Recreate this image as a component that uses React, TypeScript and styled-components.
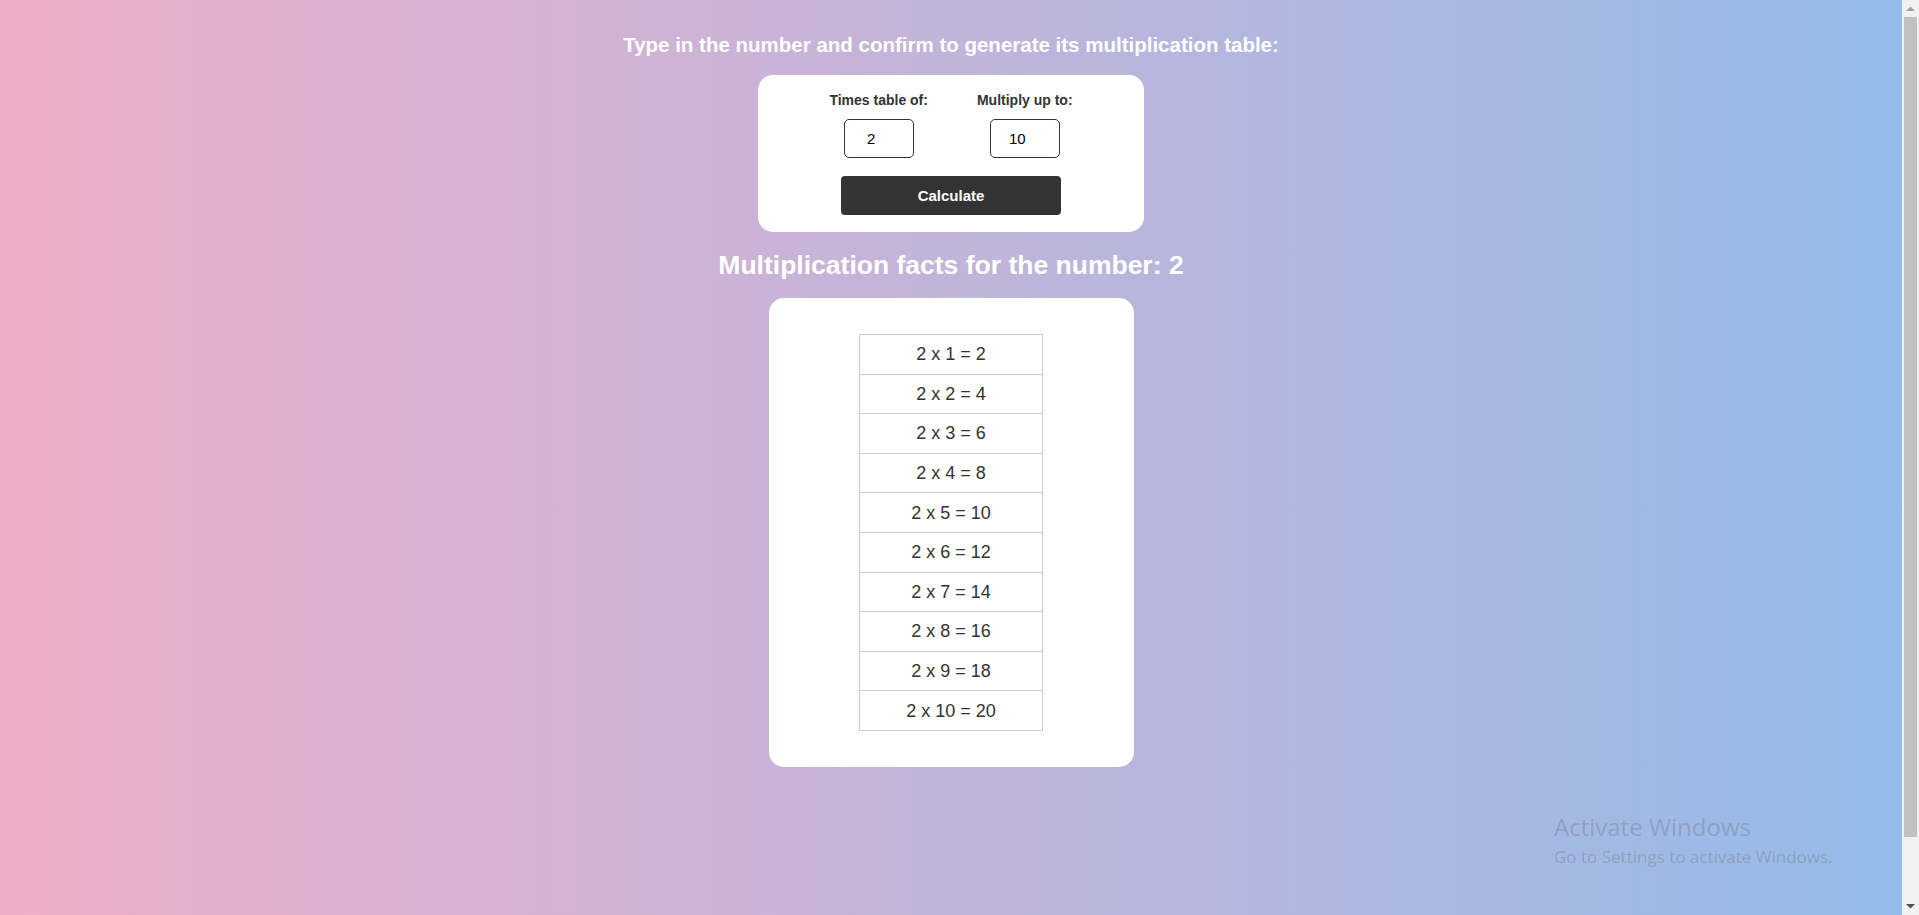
import React from "react";
import styled, { createGlobalStyle } from "styled-components";

const SCROLLBAR = 17;

const GlobalStyle = createGlobalStyle`
  html, body {
    margin: 0;
    padding: 0;
  }
  html {
    background:
      linear-gradient(90deg, #eeaeca 0%, #94bbe9 100%) left top / calc(100% - ${SCROLLBAR}px) 100% no-repeat fixed,
      #94bbe9;
  }
  body {
    font-family: "Liberation Sans", Arial, sans-serif;
    min-height: 100vh;
  }
`;

const Page = styled.main`
  display: flex;
  flex-direction: column;
  align-items: center;
  margin-right: ${SCROLLBAR}px;
  padding: 33px 0 215px;
`;

const Title = styled.h1`
  margin: 0;
  font-size: 20.5px;
  line-height: 24px;
  font-weight: 700;
  color: #ffffff;
`;

const Card = styled.section<{ $width: number }>`
  width: ${(p) => p.$width}px;
  box-sizing: border-box;
  background: #ffffff;
  border-radius: 15px;
  display: flex;
  flex-direction: column;
  align-items: center;
`;

const FormCard = styled(Card)`
  margin-top: 18px;
  padding: 17px 0 17px;
`;

const Fields = styled.div`
  display: flex;
  justify-content: center;
  gap: 49px;
`;

const Field = styled.label`
  display: flex;
  flex-direction: column;
  align-items: center;
  gap: 11px;
`;

const LabelText = styled.span`
  font-size: 14px;
  line-height: 16px;
  font-weight: 700;
  color: #333333;
`;

const NumberInput = styled.input`
  width: 70px;
  height: 39px;
  box-sizing: border-box;
  border: 1px solid #333333;
  border-radius: 5px;
  padding: 0 2px;
  font-family: "Liberation Sans", Arial, sans-serif;
  font-size: 15px;
  font-weight: 400;
  color: #000000;
  text-align: center;
  background: #ffffff;
  outline: none;
`;

const Button = styled.button`
  margin-top: 18px;
  width: 220px;
  height: 39px;
  border: none;
  border-radius: 4px;
  background: #333333;
  color: #ffffff;
  font-family: "Liberation Sans", Arial, sans-serif;
  font-size: 15px;
  font-weight: 700;
  cursor: pointer;
`;

const Subtitle = styled.h2`
  margin: 18px 0 0;
  font-size: 26.5px;
  line-height: 30px;
  font-weight: 700;
  color: #ffffff;
`;

const ResultCard = styled(Card)`
  margin-top: 18px;
  padding: 36px 0;
`;

const Table = styled.table`
  width: 184px;
  border-collapse: collapse;
`;

const Cell = styled.td`
  border: 1px solid #cccccc;
  padding: 9px 0;
  height: 39.6px;
  box-sizing: border-box;
  text-align: center;
  font-size: 18px;
  line-height: 20px;
  color: #333333;
`;

const Watermark = styled.div`
  position: fixed;
  left: 1554px;
  top: 811px;
  font-family: "Open Sans", "Noto Sans", sans-serif;
  color: rgba(125, 125, 135, 0.42);
  pointer-events: none;
`;

const WatermarkTitle = styled.div`
  font-size: 24px;
  line-height: 32px;
`;

const WatermarkText = styled.div`
  margin-top: 2px;
  font-size: 17px;
  line-height: 24px;
`;

const Scrollbar = styled.div`
  position: fixed;
  top: 0;
  right: 0;
  width: ${SCROLLBAR}px;
  height: 100vh;
  background: #f1f1f1;
  display: flex;
  flex-direction: column;
`;

const ScrollButton = styled.div`
  height: 17px;
  flex: none;
  display: flex;
  align-items: center;
  justify-content: center;
`;

const ScrollTrack = styled.div`
  flex: 1;
  display: flex;
  flex-direction: column;
  padding: 0 2px;
`;

const ScrollThumb = styled.div`
  height: 820px;
  background: #c1c1c1;
`;

const Arrow = ({ up, color }: { up?: boolean; color: string }) => (
  <svg width="9" height="5" viewBox="0 0 9 5">
    <polygon points={up ? "0,5 9,5 4.5,0.5" : "0,0 9,0 4.5,4.5"} fill={color} />
  </svg>
);

export default function App() {
  const base = 2;
  const upTo = 10;
  const rows = Array.from({ length: upTo }, (_, i) => i + 1);

  return (
    <>
      <GlobalStyle />
      <Page>
        <Title>Type in the number and confirm to generate its multiplication table:</Title>
        <FormCard $width={386}>
          <Fields>
            <Field>
              <LabelText>Times table of:</LabelText>
              <NumberInput type="number" defaultValue={base} />
            </Field>
            <Field>
              <LabelText>Multiply up to:</LabelText>
              <NumberInput type="number" defaultValue={upTo} />
            </Field>
          </Fields>
          <Button type="button">Calculate</Button>
        </FormCard>
        <Subtitle>Multiplication facts for the number: {base}</Subtitle>
        <ResultCard $width={365}>
          <Table>
            <tbody>
              {rows.map((i) => (
                <tr key={i}>
                  <Cell>
                    {base} x {i} = {base * i}
                  </Cell>
                </tr>
              ))}
            </tbody>
          </Table>
        </ResultCard>
      </Page>
      <Watermark>
        <WatermarkTitle>Activate Windows</WatermarkTitle>
        <WatermarkText>Go to Settings to activate Windows.</WatermarkText>
      </Watermark>
      <Scrollbar>
        <ScrollButton>
          <Arrow up color="#a3a3a3" />
        </ScrollButton>
        <ScrollTrack>
          <ScrollThumb />
        </ScrollTrack>
        <ScrollButton>
          <Arrow color="#505050" />
        </ScrollButton>
      </Scrollbar>
    </>
  );
}
